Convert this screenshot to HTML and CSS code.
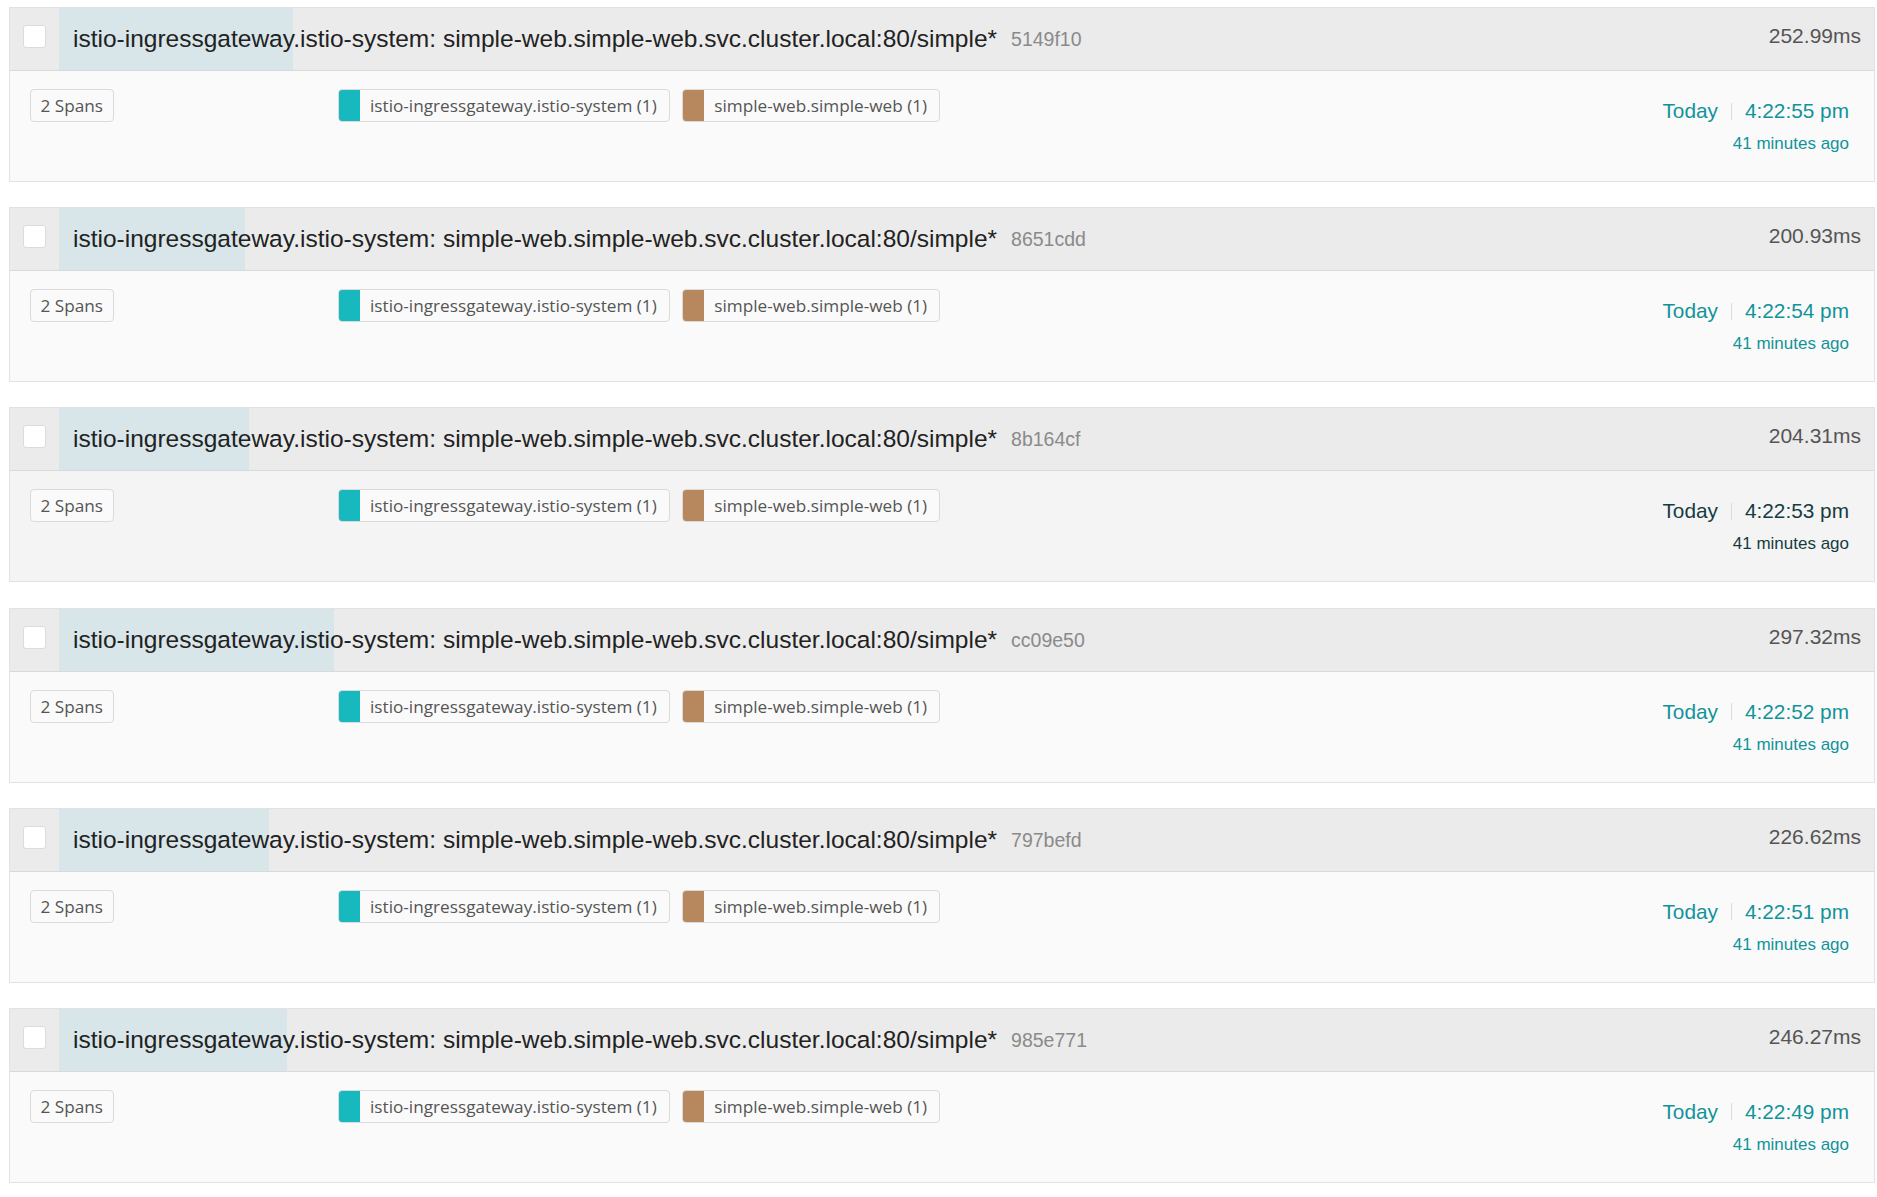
FILE: index.html
```html
<!DOCTYPE html>
<html>
<head>
<meta charset="utf-8">
<link rel="stylesheet" href="styles.css">
</head>
<body>
<div class="results">

  <div class="card">
    <div class="card-header">
      <div class="check-cell"><span class="checkbox"></span></div>
      <div class="title-cell">
        <span class="dur-bar" style="width:234px"></span>
        <span class="title">istio-ingressgateway.istio-system: simple-web.simple-web.svc.cluster.local:80/simple*</span>
        <span class="trace-id">5149f10</span>
      </div>
      <div class="duration">252.99ms</div>
    </div>
    <div class="card-body">
      <div class="spans-col"><span class="tag">2 Spans</span></div>
      <div class="services">
        <span class="svc"><span class="swatch teal"></span><span class="svc-name">istio-ingressgateway.istio-system (1)</span></span>
        <span class="svc"><span class="swatch brown"></span><span class="svc-name">simple-web.simple-web (1)</span></span>
      </div>
      <div class="time-col">
        <div class="time-row"><span class="day">Today</span><span class="sep"></span><span class="clock">4:22:55 pm</span></div>
        <div class="ago">41 minutes ago</div>
      </div>
    </div>
  </div>

  <div class="card">
    <div class="card-header">
      <div class="check-cell"><span class="checkbox"></span></div>
      <div class="title-cell">
        <span class="dur-bar" style="width:186px"></span>
        <span class="title">istio-ingressgateway.istio-system: simple-web.simple-web.svc.cluster.local:80/simple*</span>
        <span class="trace-id">8651cdd</span>
      </div>
      <div class="duration">200.93ms</div>
    </div>
    <div class="card-body">
      <div class="spans-col"><span class="tag">2 Spans</span></div>
      <div class="services">
        <span class="svc"><span class="swatch teal"></span><span class="svc-name">istio-ingressgateway.istio-system (1)</span></span>
        <span class="svc"><span class="swatch brown"></span><span class="svc-name">simple-web.simple-web (1)</span></span>
      </div>
      <div class="time-col">
        <div class="time-row"><span class="day">Today</span><span class="sep"></span><span class="clock">4:22:54 pm</span></div>
        <div class="ago">41 minutes ago</div>
      </div>
    </div>
  </div>

  <div class="card card-hover">
    <div class="card-header">
      <div class="check-cell"><span class="checkbox"></span></div>
      <div class="title-cell">
        <span class="dur-bar" style="width:190px"></span>
        <span class="title">istio-ingressgateway.istio-system: simple-web.simple-web.svc.cluster.local:80/simple*</span>
        <span class="trace-id">8b164cf</span>
      </div>
      <div class="duration">204.31ms</div>
    </div>
    <div class="card-body">
      <div class="spans-col"><span class="tag">2 Spans</span></div>
      <div class="services">
        <span class="svc"><span class="swatch teal"></span><span class="svc-name">istio-ingressgateway.istio-system (1)</span></span>
        <span class="svc"><span class="swatch brown"></span><span class="svc-name">simple-web.simple-web (1)</span></span>
      </div>
      <div class="time-col">
        <div class="time-row"><span class="day">Today</span><span class="sep"></span><span class="clock">4:22:53 pm</span></div>
        <div class="ago">41 minutes ago</div>
      </div>
    </div>
  </div>

  <div class="card">
    <div class="card-header">
      <div class="check-cell"><span class="checkbox"></span></div>
      <div class="title-cell">
        <span class="dur-bar" style="width:275px"></span>
        <span class="title">istio-ingressgateway.istio-system: simple-web.simple-web.svc.cluster.local:80/simple*</span>
        <span class="trace-id">cc09e50</span>
      </div>
      <div class="duration">297.32ms</div>
    </div>
    <div class="card-body">
      <div class="spans-col"><span class="tag">2 Spans</span></div>
      <div class="services">
        <span class="svc"><span class="swatch teal"></span><span class="svc-name">istio-ingressgateway.istio-system (1)</span></span>
        <span class="svc"><span class="swatch brown"></span><span class="svc-name">simple-web.simple-web (1)</span></span>
      </div>
      <div class="time-col">
        <div class="time-row"><span class="day">Today</span><span class="sep"></span><span class="clock">4:22:52 pm</span></div>
        <div class="ago">41 minutes ago</div>
      </div>
    </div>
  </div>

  <div class="card">
    <div class="card-header">
      <div class="check-cell"><span class="checkbox"></span></div>
      <div class="title-cell">
        <span class="dur-bar" style="width:210px"></span>
        <span class="title">istio-ingressgateway.istio-system: simple-web.simple-web.svc.cluster.local:80/simple*</span>
        <span class="trace-id">797befd</span>
      </div>
      <div class="duration">226.62ms</div>
    </div>
    <div class="card-body">
      <div class="spans-col"><span class="tag">2 Spans</span></div>
      <div class="services">
        <span class="svc"><span class="swatch teal"></span><span class="svc-name">istio-ingressgateway.istio-system (1)</span></span>
        <span class="svc"><span class="swatch brown"></span><span class="svc-name">simple-web.simple-web (1)</span></span>
      </div>
      <div class="time-col">
        <div class="time-row"><span class="day">Today</span><span class="sep"></span><span class="clock">4:22:51 pm</span></div>
        <div class="ago">41 minutes ago</div>
      </div>
    </div>
  </div>

  <div class="card">
    <div class="card-header">
      <div class="check-cell"><span class="checkbox"></span></div>
      <div class="title-cell">
        <span class="dur-bar" style="width:228px"></span>
        <span class="title">istio-ingressgateway.istio-system: simple-web.simple-web.svc.cluster.local:80/simple*</span>
        <span class="trace-id">985e771</span>
      </div>
      <div class="duration">246.27ms</div>
    </div>
    <div class="card-body">
      <div class="spans-col"><span class="tag">2 Spans</span></div>
      <div class="services">
        <span class="svc"><span class="swatch teal"></span><span class="svc-name">istio-ingressgateway.istio-system (1)</span></span>
        <span class="svc"><span class="swatch brown"></span><span class="svc-name">simple-web.simple-web (1)</span></span>
      </div>
      <div class="time-col">
        <div class="time-row"><span class="day">Today</span><span class="sep"></span><span class="clock">4:22:49 pm</span></div>
        <div class="ago">41 minutes ago</div>
      </div>
    </div>
  </div>

</div>
</body>
</html>
```

FILE: styles.css
```css
* { box-sizing: border-box; }

html, body {
  margin: 0;
  padding: 0;
  background: #ffffff;
}

body {
  font-family: "Liberation Sans", Arial, sans-serif;
  color: #262626;
}

.results {
  padding: 7px 2px 0 9px;
}

.card {
  border: 1px solid #e2e2e2;
  margin-bottom: 25.2px;
  background: #fafafa;
}

.card-header {
  display: flex;
  height: 63px;
  background: #ebebeb;
  border-bottom: 1px solid #d9d9d9;
}

.check-cell {
  flex: 0 0 49px;
  padding: 17px 13px 0 13px;
}

.checkbox {
  display: block;
  width: 23px;
  height: 23px;
  background: #ffffff;
  border: 1px solid #dcdcdc;
  border-radius: 3px;
}

.title-cell {
  flex: 1 1 auto;
  position: relative;
  display: flex;
  align-items: center;
  padding-left: 14px;
  white-space: nowrap;
}

.dur-bar {
  position: absolute;
  left: 0;
  top: 0;
  bottom: 0;
  background: #d8e6ea;
}

.title {
  position: relative;
  font-size: 24.5px;
  line-height: 28px;
  color: #222222;
}

.trace-id {
  position: relative;
  font-size: 19.5px;
  line-height: 28px;
  color: #8a8a8a;
  margin-left: 14px;
}

.duration {
  flex: 0 0 auto;
  padding: 16px 13px 0 0;
  font-size: 21px;
  line-height: 24px;
  color: #555555;
}

.card-body {
  display: flex;
  height: 110px;
  padding: 18px 25px 0 19.5px;
}

.card-hover .card-body {
  background: #f4f4f4;
}

.spans-col {
  flex: 0 0 308px;
}

.tag,
.svc {
  display: inline-flex;
  height: 33px;
  border: 1px solid #dadada;
  border-radius: 4px;
  background: #fafafa;
  font-family: "Open Sans", "Noto Sans", sans-serif;
  font-size: 17.2px;
  color: #555555;
  align-items: center;
  white-space: nowrap;
}

.tag {
  padding: 0 10px;
}

.services {
  flex: 1 1 auto;
  display: flex;
  align-items: flex-start;
  gap: 12px;
}

.svc {
  overflow: hidden;
  padding-right: 12px;
}

.swatch {
  align-self: stretch;
  width: 22px;
  margin: -1px 0 -1px -1px;
  border-radius: 4px 0 0 4px;
}

.swatch.teal { background: #17b8be; }
.swatch.brown { background: #b7885e; }

.svc-name {
  padding-left: 10.5px;
}

.time-col {
  flex: 0 0 auto;
  padding-top: 10px;
  text-align: right;
  color: #11939a;
}

.card-hover .time-col {
  color: #163c41;
}

.time-row {
  display: flex;
  justify-content: flex-end;
  align-items: center;
  font-size: 20.8px;
  line-height: 24px;
}

.sep {
  width: 1px;
  height: 17px;
  background: #dddddd;
  margin: 0 13px;
}

.ago {
  margin-top: 10px;
  font-size: 17px;
  line-height: 21px;
}
```
